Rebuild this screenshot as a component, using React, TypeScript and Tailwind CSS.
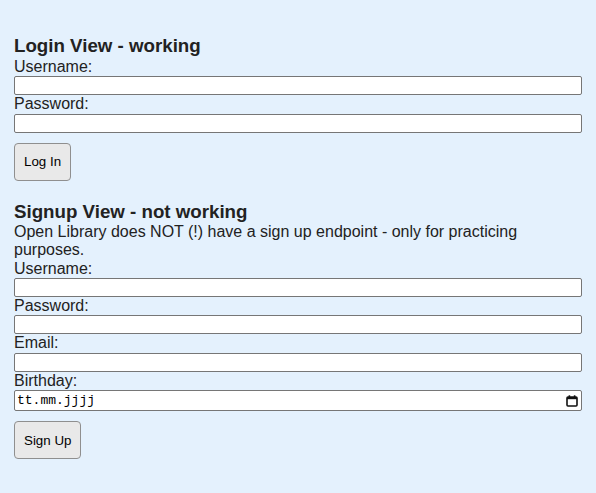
import React from 'react';

const inputCls =
  'block w-full h-[19px] border border-[#767676] rounded-[2px] bg-white px-[2px] text-[13.33px] outline-none';
const buttonCls =
  'block mt-[10px] h-[38px] px-[9px] border border-[#8f8f8f] rounded-[4px] bg-[#e9e9e9] text-[13.33px] leading-[15px] text-black';

const Field: React.FC<{ label: string; type?: string }> = ({ label, type = 'text' }) => (
  <>
    <label className="block">{label}</label>
    <input type={type} className={inputCls} />
  </>
);

const CalendarIcon = () => (
  <svg width="12" height="12" viewBox="0 0 12 12" className="shrink-0">
    <rect x="1" y="2" width="10" height="9" rx="1" fill="none" stroke="#111" strokeWidth="1.6" />
    <rect x="1" y="2" width="10" height="2.2" fill="#111" />
    <rect x="2.6" y="0.3" width="1.6" height="2.4" fill="#111" />
    <rect x="7.8" y="0.3" width="1.6" height="2.4" fill="#111" />
  </svg>
);

export default function App() {
  return (
    <div className="min-h-screen bg-[#e4f1fd] px-[14px] pt-[35px] pb-[20px] font-['Liberation_Sans',Arial,sans-serif] text-[16px] leading-[18.4px] text-[#222]">
      <h3 className="text-[18.72px] font-bold leading-[22px] mb-[1px]">Login View - working</h3>
      <Field label="Username:" />
      <Field label="Password:" type="password" />
      <button className={buttonCls}>Log In</button>

      <h3 className="mt-[20px] text-[18.72px] font-bold leading-[22px]">Signup View - not working</h3>
      <p>Open Library does NOT (!) have a sign up endpoint - only for practicing purposes.</p>
      <Field label="Username:" />
      <Field label="Password:" type="password" />
      <Field label="Email:" type="email" />
      <label className="block">Birthday:</label>
      <div className="flex items-center justify-between h-[21px] border border-[#767676] rounded-[2px] bg-white pl-[2px] pr-[3px]">
        <span className="font-['Liberation_Mono','DejaVu_Sans_Mono',monospace] text-[13px] text-black">tt.mm.jjjj</span>
        <CalendarIcon />
      </div>
      <button className={buttonCls}>Sign Up</button>
    </div>
  );
}
